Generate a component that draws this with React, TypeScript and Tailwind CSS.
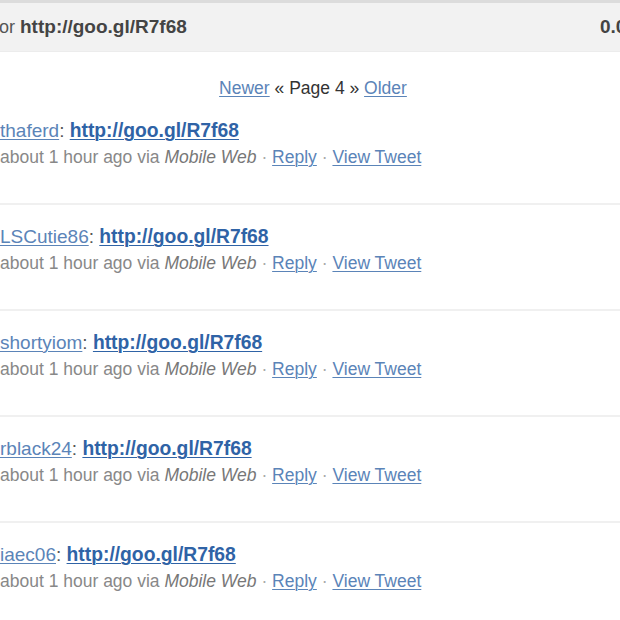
const tweets = [
  { user: "thaferd" },
  { user: "LSCutie86" },
  { user: "shortyiom" },
  { user: "rblack24" },
  { user: "iaec06" },
];

const link = "text-[#5b84b8] underline underline-offset-2 decoration-1";

export default function App() {
  return (
    <div
      className="w-[620px] h-[620px] overflow-hidden bg-white text-[17.5px]"
      style={{ fontFamily: '"Liberation Sans", Arial, sans-serif' }}
    >
      {/* search header */}
      <div className="border-t-[3px] border-[#dcdcdc] bg-[#f2f2f2] h-[52px] flex items-center justify-between border-b border-b-[#ececec]">
        <div className="ml-[-6px] text-[18px] text-[#555] whitespace-nowrap">
          for <span className="font-bold text-[19px] text-[#444]">http://goo.gl/R7f68</span>
        </div>
        <div className="mr-[-17px] font-bold text-[19px] text-[#444]">0.06</div>
      </div>

      {/* pagination */}
      <div className="pt-[25px] pl-[6px] h-[47px] leading-[22px] text-center text-[#333]">
        <a className={link}>Newer</a> « Page 4 » <a className={link}>Older</a>
      </div>

      {/* tweets */}
      <div>
        {tweets.map((t, i) => (
          <div
            key={t.user}
            className={`leading-[26px] whitespace-nowrap pb-[33px] ${
              i === 0 ? "pt-[19px]" : "pt-[19px] border-t-2 border-[#f0f0f0]"
            }`}
          >
            <div className="text-[19px] text-[#555]">
              <a className={link}>{t.user}</a>:{" "}
              <a className="font-bold text-[19.3px] text-[#2f63a6] underline underline-offset-2 decoration-1">
                http://goo.gl/R7f68
              </a>
            </div>
            <div className="text-[#888]">
              about 1 hour ago via <i className="text-[#777]">Mobile Web</i>{" "}
              <span className="text-[#aaa]">·</span> <a className={link}>Reply</a>{" "}
              <span className="text-[#aaa]">·</span> <a className={link}>View Tweet</a>
            </div>
          </div>
        ))}
      </div>
    </div>
  );
}
